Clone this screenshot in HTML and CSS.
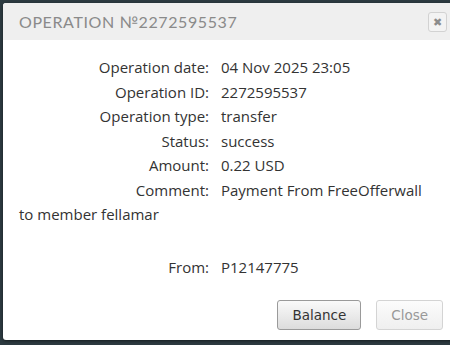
FILE: index.html
```html
<html>
  <head>
    <title>Operation</title>
    <link rel="stylesheet" href="styles.css">
  </head>
  <body>
    <div class="dialog">
      <div class="dialog-head">
        <span class="dialog-title">Operation №2272595537</span>
        <button class="dialog-x">&#10006;</button>
      </div>
      <div class="dialog-body">
        <div class="row"><span class="lbl">Operation date:</span>04 Nov 2025 23:05</div>
        <div class="row"><span class="lbl">Operation ID:</span>2272595537</div>
        <div class="row"><span class="lbl">Operation type:</span>transfer</div>
        <div class="row"><span class="lbl">Status:</span>success</div>
        <div class="row"><span class="lbl">Amount:</span>0.22 USD</div>
        <div class="row"><span class="lbl">Comment:</span>Payment From FreeOfferwall to member fellamar<br><br></div>
        <div class="row row-from"><span class="lbl">From:</span>P12147775</div>
      </div>
      <div class="dialog-foot">
        <button class="btn">Balance</button>
        <button class="btn btn-off">Close</button>
      </div>
    </div>
  </body>
</html>
```
FILE: styles.css
```css
* {
  margin: 0;
  padding: 0;
}

body {
  background: #2c3a40;
  padding: 3px 0 0 3px;
  font-family: "Open Sans", sans-serif;
  overflow: hidden;
}

.dialog {
  background: #fff;
  width: 455px;
  height: 337px;
  border-radius: 3px;
  box-shadow: 0 1px 3px rgba(0, 0, 0, 0.5);
}

.dialog-head {
  background: #efefef;
  height: 37px;
  display: flex;
  align-items: center;
  padding-left: 16px;
  border-radius: 3px 3px 0 0;
}

.dialog-title {
  font-family: "Lato", sans-serif;
  font-size: 16px;
  text-transform: uppercase;
  letter-spacing: 0.6px;
  color: #8a8a8a;
  flex: 1;
}

.dialog-x {
  width: 19px;
  height: 20px;
  margin-right: 11px;
  border: 1px solid #d2d2d2;
  border-radius: 3px;
  background: #f3f3f3;
  color: #8c8c8c;
  font-size: 11px;
  line-height: 18px;
  text-align: center;
}

.dialog-body {
  padding: 15px 26px 0 16px;
  font-size: 15px;
  line-height: 24.5px;
  color: #333;
}

.row-from {
  margin-top: 4px;
}

.lbl {
  display: inline-block;
  width: 190px;
  text-align: right;
  padding-right: 12px;
}

.dialog-foot {
  display: flex;
  justify-content: flex-end;
  gap: 15px;
  padding: 20px 15px 0 0;
}

.btn {
  font-family: "DejaVu Sans", sans-serif;
  font-size: 13.5px;
  height: 30px;
  padding: 0 14px;
  border: 1px solid #9a9a9a;
  border-radius: 3px;
  background: linear-gradient(#fafafa, #dcdcdc);
  color: #333;
}

.btn-off {
  border-color: #d4d4d4;
  background: linear-gradient(#fcfcfc, #efefef);
  color: #999;
}
```
